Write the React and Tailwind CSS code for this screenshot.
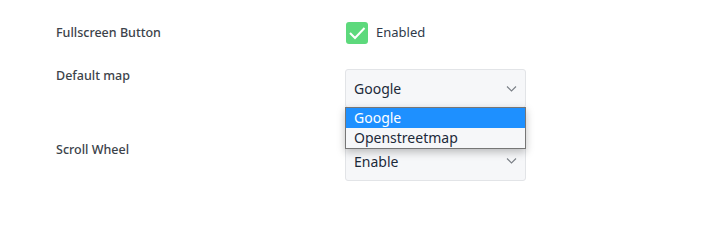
import React from "react";

function Chevron() {
  return (
    <svg width="11" height="7" viewBox="0 0 11 7" className="absolute right-[8px] top-1/2 -translate-y-1/2">
      <path d="M1 1 L5.5 5.5 L10 1" fill="none" stroke="#7b8087" strokeWidth="1.1" />
    </svg>
  );
}

export default function App() {
  return (
    <div className="w-[706px] h-[250px] bg-white text-[13px] text-[#32373c]" style={{ fontFamily: '"Noto Sans", "Open Sans", sans-serif' }}>
      <div className="pl-[56px] pt-[22px]">
        <div className="flex items-center h-[22px]">
          <div className="w-[290px] font-medium text-[12.5px] text-[#3c434a]">Fullscreen Button</div>
          <div className="flex items-center gap-[8px]">
            <div className="w-[22px] h-[22px] rounded-[3px] bg-[#5dd97c] flex items-center justify-center">
              <svg width="18" height="14" viewBox="0 0 18 14">
                <path d="M2 7 L7 12 L16.5 2" fill="none" stroke="white" strokeWidth="2" />
              </svg>
            </div>
            <span className="text-[#2f3a4a]">Enabled</span>
          </div>
        </div>

        <div className="flex mt-[25px]">
          <div className="w-[289px] font-medium text-[12.5px] text-[#3c434a] -mt-[3px] leading-[20px]">Default map</div>
          <div className="relative">
            <div className="relative w-[181px] h-[39px] border border-[#e2e4e7] rounded-[3px] bg-[#f6f7f9] pl-[8px] flex items-center text-[#1d2a3a] text-[14px]">
              Google
              <Chevron />
            </div>
            <div className="absolute left-0 top-[38px] w-[181px] border border-[#767676] bg-[#f6f7f9] shadow-[0_3px_8px_rgba(0,0,0,0.25)] z-10 text-[14px]">
              <div className="h-[20px] leading-[20px] pl-[8px] bg-[#1e90ff] text-white">Google</div>
              <div className="h-[20px] leading-[20px] pl-[8px] text-[#1d2a3a]">Openstreetmap</div>
            </div>
          </div>
        </div>

        <div className="flex mt-[33px]">
          <div className="w-[289px] font-medium text-[12.5px] text-[#3c434a] -mt-[1px] leading-[20px]">Scroll Wheel</div>
          <div className="relative w-[181px] h-[40px] border border-[#e2e4e7] rounded-[3px] bg-[#f6f7f9] pl-[8px] flex items-center text-[#1d2a3a] text-[14px]">
            Enable
            <Chevron />
          </div>
        </div>
      </div>
    </div>
  );
}
